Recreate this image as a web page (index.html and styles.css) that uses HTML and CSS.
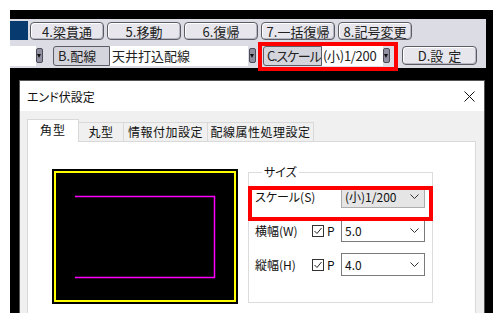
FILE: index.html
```html
<!DOCTYPE html>
<html lang="ja">
<head>
<meta charset="utf-8">
<link rel="stylesheet" href="styles.css">
</head>
<body>
<div class="screen">
  <div class="toolbar">
    <div class="row row1">
      <div class="blue"></div>
      <div class="tbtn">4.梁貫通</div>
      <div class="tbtn">5.移動</div>
      <div class="tbtn">6.復帰</div>
      <div class="tbtn">7.一括復帰</div>
      <div class="tbtn">8.記号変更</div>
    </div>
    <div class="row row2">
      <div class="field f0"></div><div class="arrow"></div>
      <div class="lbl lb">B.配線</div><div class="field f1">天井打込配線</div><div class="arrow a1"></div>
      <div class="lbl lc">C.スケール</div><div class="field f2">(小)1/200</div><div class="arrow"></div>
      <div class="tbtn dbtn">D.設<span class="sp">定</span></div>
    </div>
  </div>
  <div class="dialog">
    <div class="titlebar">
      <span class="title">エンド伏設定</span>
      <svg class="close" width="11" height="11" viewBox="0 0 11 11"><path d="M0.5 0.5L10.5 10.5M10.5 0.5L0.5 10.5" stroke="#111" stroke-width="1"/></svg>
    </div>
    <div class="dbody">
      <div class="tabs">
        <div class="tab sel">角型</div>
        <div class="tab t2">丸型</div>
        <div class="tab t3">情報付加設定</div>
        <div class="tab t4">配線属性処理設定</div>
      </div>
      <div class="panel">
        <div class="preview">
          <svg width="186" height="135" viewBox="0 0 186 135">
            <rect x="0" y="0" width="186" height="135" fill="#000"/>
            <rect x="3" y="3" width="180" height="129" fill="none" stroke="#ffff00" stroke-width="2"/>
            <polyline points="23,27.5 162.5,27.5 162.5,108.5 23,108.5" fill="none" stroke="#ff00ff" stroke-width="1.5"/>
          </svg>
        </div>
        <fieldset class="grp">
          <legend>サイズ</legend>
          <div class="frow">
            <span class="flabel">スケール(S)</span>
            <div class="combo gray"><span>(小)1/200</span><svg width="9" height="5" viewBox="0 0 9 5"><polyline points="0.5,0.5 4.5,4.5 8.5,0.5" fill="none" stroke="#333"/></svg></div>
          </div>
          <div class="frow">
            <span class="flabel">横幅(W)</span>
            <span class="chk"><svg width="12" height="12" viewBox="0 0 12 12"><rect x="0.5" y="0.5" width="11" height="11" fill="#fff" stroke="#333"/><polyline points="2.5,6 5,8.5 9.5,3" fill="none" stroke="#222" stroke-width="1"/></svg></span>
            <span class="p">P</span>
            <div class="combo"><span>5.0</span><svg width="9" height="5" viewBox="0 0 9 5"><polyline points="0.5,0.5 4.5,4.5 8.5,0.5" fill="none" stroke="#333"/></svg></div>
          </div>
          <div class="frow">
            <span class="flabel">縦幅(H)</span>
            <span class="chk"><svg width="12" height="12" viewBox="0 0 12 12"><rect x="0.5" y="0.5" width="11" height="11" fill="#fff" stroke="#333"/><polyline points="2.5,6 5,8.5 9.5,3" fill="none" stroke="#222" stroke-width="1"/></svg></span>
            <span class="p">P</span>
            <div class="combo"><span>4.0</span><svg width="9" height="5" viewBox="0 0 9 5"><polyline points="0.5,0.5 4.5,4.5 8.5,0.5" fill="none" stroke="#333"/></svg></div>
          </div>
        </fieldset>
      </div>
    </div>
  </div>
</div>
<div class="mark mark1"></div>
<div class="mark mark2"></div>
</body>
</html>
```

FILE: styles.css
```css
html, body {
  margin: 0;
  padding: 0;
  background: #fff;
}
body {
  width: 503px;
  height: 323px;
  overflow: hidden;
  position: relative;
  font-family: "Noto Sans CJK JP", "Noto Sans", sans-serif;
}
.screen {
  margin: 10px 0 0 10px;
  width: 483px;
  height: 303px;
  background: #000;
  padding-top: 9px;
  box-sizing: border-box;
  overflow: hidden;
}
.toolbar {
  width: 476px;
  background: #dcdce4;
  font-size: 13px;
  color: #222;
  font-feature-settings: "palt";
  white-space: nowrap;
}
.row {
  display: flex;
  align-items: center;
}
.row1 {
  height: 24px;
}
.row2 {
  height: 25px;
}
.blue {
  width: 18px;
  height: 19px;
  background: #073a6e;
  margin-right: 2px;
  align-self: flex-start;
  margin-top: 2px;
}
.tbtn {
  width: 74px;
  height: 18px;
  box-sizing: border-box;
  margin-right: 3px;
  border: 1px solid #5c5c66;
  border-radius: 4px;
  background: #e6e6ec;
  box-shadow: inset 1px 1px 0 #fff, inset -1px -1px 0 #b8b8c2;
  display: flex;
  align-items: center;
  justify-content: center;
  line-height: 1;
}
.field {
  height: 20px;
  background: #fff;
  display: flex;
  align-items: center;
  line-height: 1;
  box-sizing: border-box;
  overflow: hidden;
}
.f0 { width: 26px; }
.f1 { width: 138px; padding-left: 2px; }
.f2 { width: 61px; padding-left: 1px; letter-spacing: -0.3px; }
.arrow {
  width: 7px;
  height: 15px;
  box-sizing: border-box;
  border: 1px solid #4c4c5a;
  border-radius: 2px;
  background: #9090a0;
  position: relative;
  margin-right: 10px;
  flex: none;
}
.arrow::after {
  content: "";
  position: absolute;
  left: 0px;
  top: 5px;
  border-left: 2.5px solid transparent;
  border-right: 2.5px solid transparent;
  border-top: 4px solid #111;
}
.a1 { margin-left: 1px; margin-right: 7px; }
.f2 + .arrow { margin-right: 12px; }
.lbl {
  height: 20px;
  box-sizing: border-box;
  border: 1px solid #5c5c66;
  border-radius: 3px 0 0 3px;
  background: #d4d4dc;
  display: flex;
  align-items: center;
  padding-left: 4px;
  line-height: 1;
  flex: none;
  overflow: hidden;
}
.lb { width: 57px; }
.lc { width: 59px; letter-spacing: -1.2px; padding-left: 3px; }
.dbtn {
  width: 75px;
  height: 19px;
  margin: 0;
}
.sp {
  margin-left: 5px;
}
.dialog {
  margin: 12px 0 0 9px;
  width: 466px;
  height: 233px;
  box-sizing: border-box;
  border: 1px solid #555;
  border-bottom: none;
  background: #f0f0f0;
  overflow: hidden;
  font-size: 12px;
  color: #111;
  font-feature-settings: "palt";
}
.titlebar {
  height: 30px;
  background: #fff;
  display: flex;
  align-items: center;
  justify-content: space-between;
  padding: 0 9px 0 7px;
}
.title {
  font-size: 12px;
}
.dbody {
  padding: 8px 8px 0 7px;
}
.tabs {
  display: flex;
  align-items: flex-end;
  height: 23px;
  margin-bottom: -1px;
  position: relative;
  z-index: 1;
}
.tab {
  height: 20px;
  box-sizing: border-box;
  border: 1px solid #d9d9d9;
  border-left: none;
  background: #f0f0f0;
  display: flex;
  align-items: center;
  justify-content: center;
  line-height: 1;
  letter-spacing: 0.5px;
}
.tab.sel {
  height: 23px;
  width: 52px;
  background: #fff;
  border-left: 1px solid #d9d9d9;
  border-bottom: none;
  letter-spacing: 1px;
  padding-bottom: 3px;
}
.t2 { width: 45px; }
.t3 { width: 84px; }
.t4 { width: 106px; }
.panel {
  width: 449px;
  height: 200px;
  box-sizing: border-box;
  border: 1px solid #d9d9d9;
  background: #fff;
  display: flex;
  align-items: flex-start;
  padding: 27px 0 0 24px;
}
.preview {
  width: 186px;
  height: 135px;
  display: flex;
}
.grp {
  margin: -4px 0 0 10px;
  width: 185px;
  height: 138px;
  box-sizing: border-box;
  border: 1px solid #dcdcdc;
  padding: 6px 7px 0 6px;
  display: flex;
  flex-direction: column;
  gap: 11px;
}
.grp legend {
  margin-left: 7px;
  padding: 0 2px;
  line-height: 14px;
  font-size: 12px;
}
.frow {
  display: flex;
  align-items: center;
  height: 23px;
}
.flabel {
  width: 57px;
  white-space: nowrap;
}
.chk {
  width: 12px;
  height: 12px;
  display: flex;
}
.p {
  margin-left: 3px;
}
.combo {
  margin-left: auto;
  width: 84px;
  height: 23px;
  box-sizing: border-box;
  border: 1px solid #7a7a7a;
  background: #fff;
  display: flex;
  align-items: center;
  justify-content: space-between;
  padding: 0 5px 0 3px;
}
.combo.gray {
  background: #e5e5e5;
  border-color: #adadad;
  height: 22px;
}
.mark {
  position: absolute;
  border: 4px solid #ff0000;
  box-sizing: border-box;
}
.mark1 {
  left: 258px;
  top: 42px;
  width: 140px;
  height: 29px;
}
.mark2 {
  left: 248px;
  top: 186px;
  width: 185px;
  height: 35px;
}
```
